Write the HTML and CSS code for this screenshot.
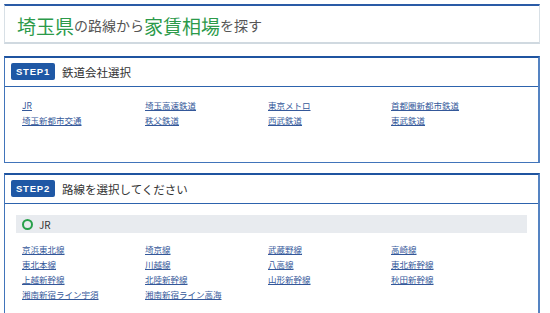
FILE: index.html
```html
<!DOCTYPE html>
<html lang="ja">
<head>
<meta charset="utf-8">
<title>埼玉県の路線から家賃相場を探す</title>
<link rel="stylesheet" href="styles.css">
</head>
<body>
<div class="page">
  <h1 class="title"><span class="em">埼玉県</span>の路線から<span class="em">家賃相場</span>を探す</h1>

  <section class="step step1">
    <div class="step-head"><span class="badge">STEP1</span><span class="step-title">鉄道会社選択</span></div>
    <div class="step-body">
      <ul class="links">
        <li><a href="#">JR</a></li>
        <li><a href="#">埼玉高速鉄道</a></li>
        <li><a href="#">東京メトロ</a></li>
        <li><a href="#">首都圏新都市鉄道</a></li>
        <li><a href="#">埼玉新都市交通</a></li>
        <li><a href="#">秩父鉄道</a></li>
        <li><a href="#">西武鉄道</a></li>
        <li><a href="#">東武鉄道</a></li>
      </ul>
    </div>
  </section>

  <section class="step step2">
    <div class="step-head"><span class="badge">STEP2</span><span class="step-title">路線を選択してください</span></div>
    <div class="step-body">
      <div class="company"><span class="ring"></span><span class="company-name">JR</span></div>
      <ul class="links lines">
        <li><a href="#">京浜東北線</a></li>
        <li><a href="#">埼京線</a></li>
        <li><a href="#">武蔵野線</a></li>
        <li><a href="#">高崎線</a></li>
        <li><a href="#">東北本線</a></li>
        <li><a href="#">川越線</a></li>
        <li><a href="#">八高線</a></li>
        <li><a href="#">東北新幹線</a></li>
        <li><a href="#">上越新幹線</a></li>
        <li><a href="#">北陸新幹線</a></li>
        <li><a href="#">山形新幹線</a></li>
        <li><a href="#">秋田新幹線</a></li>
        <li><a href="#">湘南新宿ライン宇須</a></li>
        <li><a href="#">湘南新宿ライン高海</a></li>
      </ul>
    </div>
  </section>
</div>
</body>
</html>
```

FILE: styles.css
```css
* { box-sizing: border-box; }
html, body { margin: 0; padding: 0; background: #fff; }
body {
  font-family: "Noto Sans CJK JP", "Noto Sans", sans-serif;
  color: #333;
}
.page {
  padding: 4px 10px 0 4px;
  width: 550px;
}
.title {
  margin: 0;
  height: 40px;
  border-top: 2px solid #2a5ba6;
  border-left: 1px solid #d8e0e6;
  border-right: 1px solid #d8e0e6;
  border-bottom: 2px solid #d0d9e0;
  padding: 2px 0 0 12px;
  display: flex;
  align-items: center;
  font-size: 14px;
  font-weight: normal;
  color: #555;
  line-height: 1;
}
.title .em {
  font-size: 19px;
  color: #2c9a4a;
}
.step {
  border: 1px solid #4174ba;
  border-top: 2px solid #1f54a0;
  border-right-width: 2px;
  border-right-color: #5583c2;
}
.step1 { margin-top: 12px; }
.step2 { margin-top: 10px; }
.step-head {
  display: flex;
  align-items: center;
  gap: 7px;
  height: 29px;
  padding: 0 6px 1px;
  border-bottom: 1px solid #2d63ad;
}
.badge {
  display: inline-flex;
  align-items: center;
  justify-content: center;
  width: 44px;
  height: 17px;
  background: #1f58a5;
  border-radius: 2px;
  color: #fff;
  font-family: "Liberation Sans Narrow", "Liberation Sans", "Noto Sans", sans-serif;
  font-weight: bold;
  font-size: 9.5px;
  letter-spacing: 0.8px;
}
.step-title {
  font-size: 11.5px;
  color: #333;
}
.step1 .step-body { padding: 11px 0 34px 17px; }
.step2 .step-body { padding: 11px 11px 20px 11px; }
.links {
  list-style: none;
  margin: 0;
  padding: 0;
  display: grid;
  grid-template-columns: repeat(4, 123px);
}
.links li {
  height: 15px;
  line-height: 15px;
  font-size: 8.5px;
}
.links a {
  color: #34589a;
  text-decoration: underline;
  text-underline-offset: 1px;
}
.lines { margin: 9px 0 0 6px; }
.company {
  display: flex;
  align-items: center;
  gap: 6px;
  height: 18px;
  padding-left: 6px;
  background: #e8ebef;
}
.ring {
  width: 11px;
  height: 11px;
  border: 2px solid #27a04a;
  border-radius: 50%;
}
.company-name {
  font-size: 10px;
  color: #333;
}
```
